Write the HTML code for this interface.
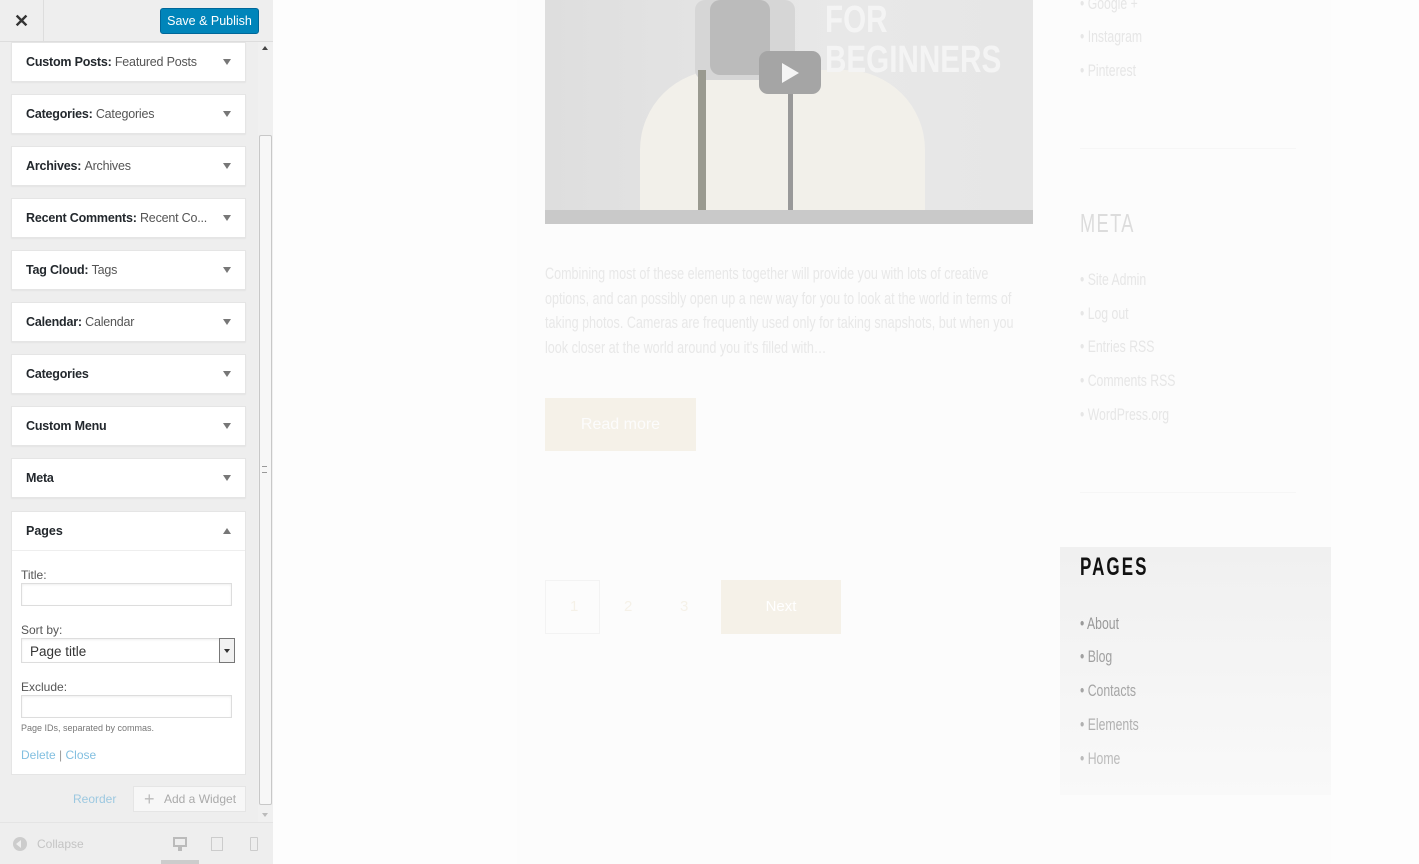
<!DOCTYPE html>
<html><head><meta charset="utf-8"><style>
*{box-sizing:border-box;margin:0;padding:0}
body{width:1419px;height:864px;overflow:hidden;background:#fdfdfd;font-family:"Liberation Sans",sans-serif;position:relative}
.side{position:absolute;left:0;top:0;width:273px;height:864px;background:#eeeeee;border-right:1px solid #ddd}
.top{position:absolute;left:0;top:0;width:273px;height:42px;background:#eee;border-bottom:1px solid #ddd}
.x{position:absolute;left:0;top:0;width:44px;height:42px;border-right:1px solid #ddd;font-size:18px;text-align:center;line-height:42px;color:#333;font-weight:bold}
.pub{position:absolute;left:160px;top:8px;width:99px;height:26px;background:#0085ba;border:1px solid #006799;border-radius:3px;color:#fff;font-size:12.5px;text-align:center;line-height:24px}
.w{position:absolute;left:11px;width:235px;height:40px;background:#fff;border:1px solid #e5e5e5;box-shadow:0 1px 1px rgba(0,0,0,.04);font-size:12.5px;color:#23282d;padding-left:14px;line-height:38px;font-weight:bold;letter-spacing:-.2px}
.w span{font-weight:normal;color:#555}
.w i{position:absolute;right:14px;top:16px;width:0;height:0;border-left:4px solid transparent;border-right:4px solid transparent;border-top:6px solid #777}
.pg{position:absolute;left:11px;top:511px;width:235px;height:264px;background:#fff;border:1px solid #e5e5e5;font-size:12px;color:#555}
.pg .h{height:39px;border-bottom:1px solid #eee;font-weight:bold;font-size:12.5px;color:#23282d;padding-left:14px;line-height:38px;position:relative}
.pg .h i{position:absolute;right:14px;top:16px;border-left:4px solid transparent;border-right:4px solid transparent;border-bottom:6px solid #777}
.lbl{position:absolute;left:9px}
.inp{position:absolute;left:9px;width:211px;height:23px;border:1px solid #ddd;box-shadow:inset 0 1px 2px rgba(0,0,0,.07)}
.scroll{position:absolute;left:258px;top:42px;width:15px;height:780px;background:#f0f0f0}
.thumb{position:absolute;left:259px;top:135px;width:13px;height:670px;background:#f7f7f7;border:1px solid #c8c8c8;border-radius:2px}
.main{position:absolute;left:517px;top:0;width:814px;height:864px;background:#fcfcfc}
.cond{font-family:"Liberation Sans",sans-serif}
.photo{position:absolute;left:545px;top:0;width:488px;height:224px;background:linear-gradient(90deg,#dedede,#e8e8e8 60%,#e6e6e6);overflow:hidden}
.li{position:absolute;left:1080px;font-size:17px;color:#e6e6e6;transform:scaleX(.72);transform-origin:left;white-space:nowrap}
.li:before{content:"• ";}
.p{position:absolute;left:545px;top:262px;width:660px;font-size:17px;line-height:24.5px;color:#e8e8e8;transform:scaleX(.74);transform-origin:left}
</style></head><body>
<div class="main"></div>
<div class="photo">
 <div style="position:absolute;left:95px;top:70px;width:285px;height:160px;background:#f2f0ea;border-radius:80px 80px 0 0"></div>
 <div style="position:absolute;left:150px;top:0;width:100px;height:80px;background:#d6d6d6;border-radius:10px"></div>
 <div style="position:absolute;left:165px;top:0;width:60px;height:75px;background:#bbb;border-radius:10px"></div>
 <div style="position:absolute;left:153px;top:70px;width:8px;height:140px;background:#9a9a90"></div>
 <div style="position:absolute;left:243px;top:75px;width:5px;height:135px;background:#999"></div>
 <div style="position:absolute;left:214px;top:51px;width:62px;height:43px;background:#a5a5a5;border-radius:9px"></div>
 <div style="position:absolute;left:237px;top:63px;border-top:10px solid transparent;border-bottom:10px solid transparent;border-left:17px solid #f5f5f5"></div>
 <div style="position:absolute;left:280px;top:0;font:bold 38px 'Liberation Sans',sans-serif;color:#f4f4f4;line-height:40px;transform:scaleX(.78);transform-origin:left">FOR<br>BEGINNERS</div>
 <div style="position:absolute;left:0;top:210px;width:488px;height:14px;background:#c9c9c9"></div>
</div>
<div class="p">Combining most of these elements together will provide you with lots of creative options, and can possibly open up a new way for you to look at the world in terms of taking photos. Cameras are frequently used only for taking snapshots, but when you look closer at the world around you it's filled with…</div>
<div style="position:absolute;left:545px;top:398px;width:151px;height:53px;background:#f5f1e8;color:#fcfcfc;font-size:16px;text-align:center;line-height:53px">Read more</div>
<div style="position:absolute;left:545px;top:580px;width:55px;height:54px;border:1px solid #f3f3f3"></div>
<div style="position:absolute;left:570px;top:598px;color:#f5f1e8;font-size:15px">1</div>
<div style="position:absolute;left:624px;top:598px;color:#f5f1e8;font-size:15px">2</div>
<div style="position:absolute;left:680px;top:598px;color:#f5f1e8;font-size:15px">3</div>
<div style="position:absolute;left:721px;top:580px;width:120px;height:54px;background:#f5f1e8;color:#fff;font-size:15px;text-align:center;line-height:54px">Next</div>
<div class="li" style="top:-6px">Google +</div>
<div class="li" style="top:27px">Instagram</div>
<div class="li" style="top:61px">Pinterest</div>
<div style="position:absolute;left:1080px;top:148px;width:216px;height:1px;background:#f6f6f6"></div>
<div style="position:absolute;left:1080px;top:208px;font-size:26px;color:#dcdcdc;letter-spacing:2px;transform:scaleX(.7);transform-origin:left">META</div>
<div class="li" style="top:270px">Site Admin</div>
<div class="li" style="top:304px">Log out</div>
<div class="li" style="top:337px">Entries RSS</div>
<div class="li" style="top:371px">Comments RSS</div>
<div class="li" style="top:405px">WordPress.org</div>
<div style="position:absolute;left:1080px;top:492px;width:216px;height:1px;background:#f6f6f6"></div>
<div style="position:absolute;left:1060px;top:547px;width:271px;height:248px;background:linear-gradient(#f0f0f0,#f9f9f9)"></div>
<div style="position:absolute;left:1080px;top:553px;font-size:25px;color:#111;font-weight:bold;letter-spacing:3px;transform:scaleX(.68);transform-origin:left">PAGES</div>
<div class="li" style="top:614px;color:#999">About</div>
<div class="li" style="top:647px;color:#a0a0a0">Blog</div>
<div class="li" style="top:681px;color:#a5a5a5">Contacts</div>
<div class="li" style="top:715px;color:#b0b0b0">Elements</div>
<div class="li" style="top:749px;color:#bbb">Home</div>

<div class="side"></div>
<div class="top"><div class="x">✕</div><div class="pub">Save &amp; Publish</div></div>
<div class="scroll"></div>
<div style="position:absolute;left:262px;top:46px;border-left:3px solid transparent;border-right:3px solid transparent;border-bottom:4px solid #444"></div>
<div class="thumb"></div>
<div style="position:absolute;left:262px;top:466px;width:5px;height:7px;border-top:1px solid #999;border-bottom:1px solid #999"></div>
<div style="position:absolute;left:262px;top:813px;border-left:3px solid transparent;border-right:3px solid transparent;border-top:4px solid #bbb"></div>
<div class="w" style="top:42px">Custom Posts: <span>Featured Posts</span><i></i></div>
<div class="w" style="top:94px">Categories: <span>Categories</span><i></i></div>
<div class="w" style="top:146px">Archives: <span>Archives</span><i></i></div>
<div class="w" style="top:198px">Recent Comments: <span>Recent Co...</span><i></i></div>
<div class="w" style="top:250px">Tag Cloud: <span>Tags</span><i></i></div>
<div class="w" style="top:302px">Calendar: <span>Calendar</span><i></i></div>
<div class="w" style="top:354px">Categories<i></i></div>
<div class="w" style="top:406px">Custom Menu<i></i></div>
<div class="w" style="top:458px">Meta<i></i></div>
<div class="pg"><div class="h">Pages<i></i></div>
 <div class="lbl" style="top:56px">Title:</div>
 <div class="inp" style="top:71px"></div>
 <div class="lbl" style="top:111px">Sort by:</div>
 <div class="inp" style="top:126px;width:214px;height:25px;font-size:13.5px;color:#333;padding:5px 8px">Page title<div style="position:absolute;right:-1px;top:-1px;width:16px;height:25px;border:1px solid #777;background:#f1f1f1"><div style="position:absolute;left:4px;top:10px;border-left:3px solid transparent;border-right:3px solid transparent;border-top:4px solid #333"></div></div></div>
 <div class="lbl" style="top:168px">Exclude:</div>
 <div class="inp" style="top:183px"></div>
 <div class="lbl" style="top:211px;font-size:9px;color:#777">Page IDs, separated by commas.</div>
 <div class="lbl" style="top:236px;color:#82bfe0">Delete <span style="color:#999">|</span> Close</div>
</div>
<div style="position:absolute;left:73px;top:792px;font-size:12px;color:#9cc8e0">Reorder</div>
<div style="position:absolute;left:133px;top:786px;width:113px;height:26px;border:1px solid #e5e5e5;background:#f7f7f7;font-size:12px;color:#aaa;line-height:24px;padding-left:30px">Add a Widget<span style="position:absolute;left:10px;top:0;font-size:18px;color:#bbb">+</span></div>
<div style="position:absolute;left:0;top:822px;width:273px;height:42px;background:#eee;border-top:1px solid #e4e4e4"></div>
<div style="position:absolute;left:13px;top:837px;width:14px;height:14px;border-radius:50%;background:#ccc"></div>
<div style="position:absolute;left:16px;top:840px;border-top:4px solid transparent;border-bottom:4px solid transparent;border-right:5px solid #eee"></div>
<div style="position:absolute;left:37px;top:837px;font-size:12px;color:#c4c4c4">Collapse</div>
<div style="position:absolute;left:173px;top:837px;width:14px;height:10px;border:2px solid #bbb"></div>
<div style="position:absolute;left:178px;top:847px;width:4px;height:4px;background:#bbb"></div>
<div style="position:absolute;left:211px;top:837px;width:12px;height:14px;border:1px solid #ccc"></div>
<div style="position:absolute;left:250px;top:837px;width:8px;height:14px;border:1px solid #ccc;border-radius:1px"></div>
<div style="position:absolute;left:161px;top:860px;width:38px;height:4px;background:#ccc"></div>
</body></html>
